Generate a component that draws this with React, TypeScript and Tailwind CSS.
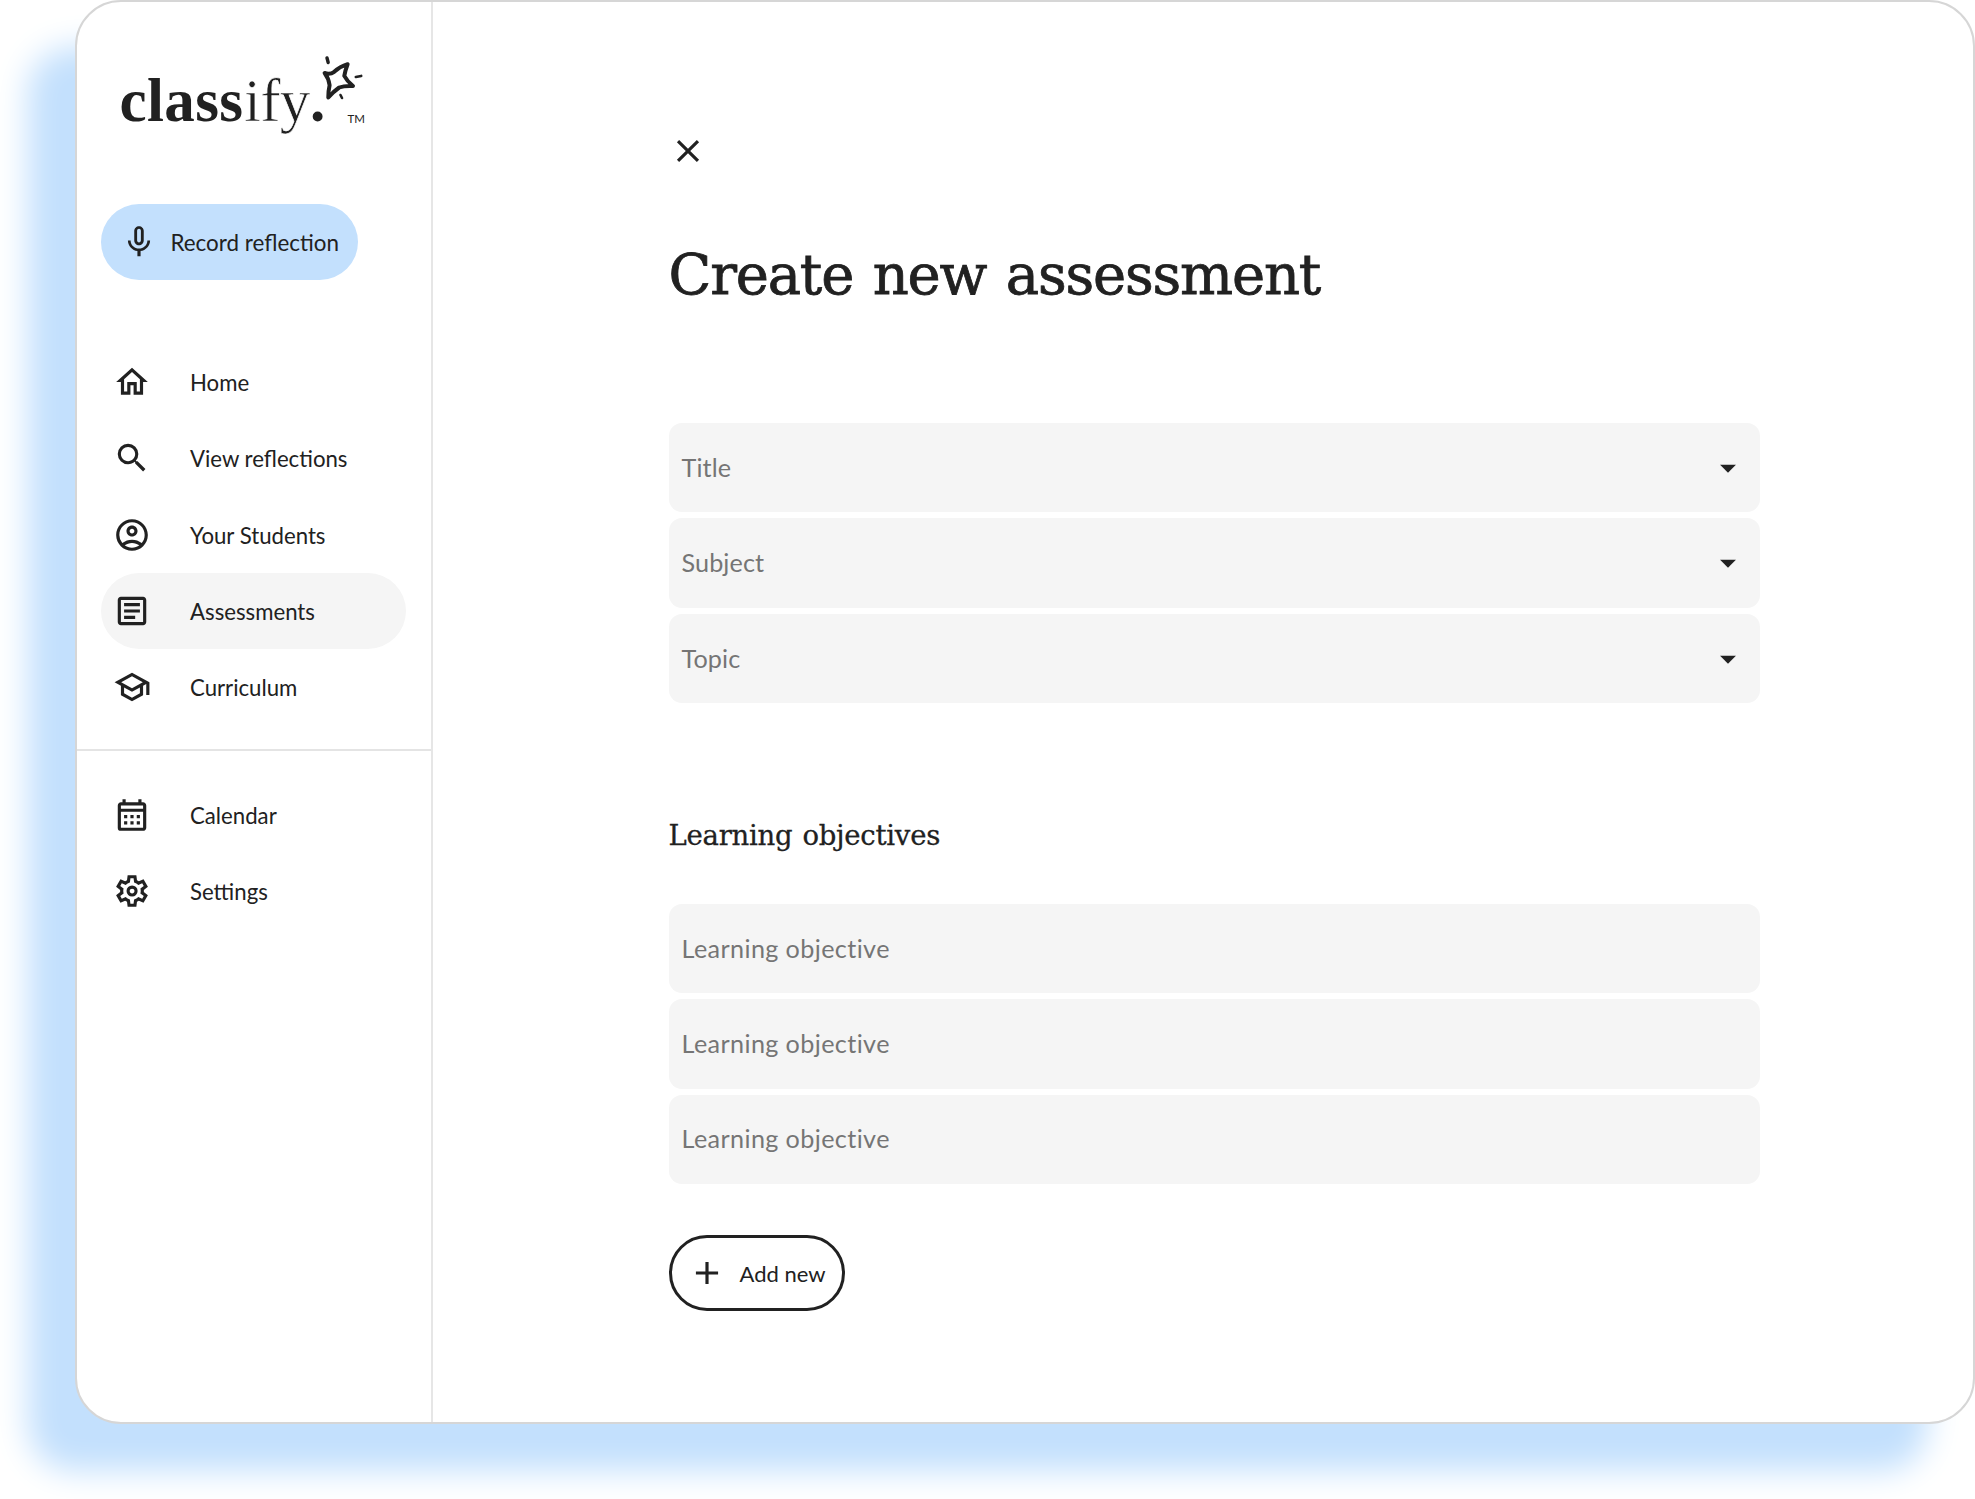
import React from 'react';
import type { ReactNode } from 'react';
import {
  MdAdd,
  MdArrowDropDown,
  MdClose,
  MdMicNone,
  MdOutlineAccountCircle,
  MdOutlineArticle,
  MdOutlineCalendarMonth,
  MdOutlineSchool,
  MdSearch,
} from 'react-icons/md';

function HouseIcon() {
  return (
    <svg viewBox="0 0 24 24" className="size-[38px]" fill="currentColor">
      <path d="M12 5.69l5 4.5V18h-2v-6H9v6H7v-7.81l5-4.5M12 3L2 12h3v8h6v-6h2v6h6v-8h3L12 3z" />
    </svg>
  );
}

function GearIcon() {
  return (
    <svg viewBox="0 -960 960 960" className="size-[38px]" fill="currentColor" fillRule="evenodd">
      <path d="m370-80-16-128q-13-5-24.5-12T307-235l-119 50L78-375l103-78q-1-7-1-13.5v-27q0-6.5 1-13.5L78-585l110-190 119 50q11-8 23-15t24-12l16-128h220l16 128q13 5 24.5 12t22.5 15l119-50 110 190-103 78q1 7 1 13.5v27q0 6.5-2 13.5l103 78-110 190-118-50q-11 8-23 15t-24 12L590-80H370Zm70-80h79l14-106q31-8 57.5-23.5T639-327l99 41 39-68-86-65q5-14 7-29.5t2-31.5q0-16-2-31.5t-7-29.5l86-65-39-68-99 42q-22-23-48.5-38.5T533-694l-13-106h-79l-14 106q-31 8-57.5 23.5T321-633l-99-41-39 68 86 64q-5 15-7 30t-2 32q0 16 2 31t7 30l-86 65 39 68 99-42q22 23 48.5 38.5T427-266l13 106Zm42-180q58 0 99-41t41-99q0-58-41-99t-99-41q-59 0-99.5 41T342-480q0 58 40.5 99t99.5 41Zm0-80q-25 0-42.5-17.5T422-480q0-25 17.5-42.5T482-540q25 0 42.5 17.5T542-480q0 25-17.5 42.5T482-420Z" />
    </svg>
  );
}

function Logo() {
  return (
    <div className="relative ml-[42.5px] mt-[63px] flex h-[72px] w-[250px] items-center whitespace-nowrap font-['Liberation_Serif',serif] text-[61px] leading-[72px]">
      <span className="w-[124.5px] tracking-[0.4px] font-bold">class</span>
      <span className="w-[66px] tracking-[-0.8px] [-webkit-text-stroke:0.7px_#ffffff]">ify</span>
      <span className="font-bold">.</span>
      <svg
        viewBox="0 0 44 50"
        className="absolute left-[201px] top-[-12px] h-[50px] w-[44px]"
        fill="none"
        stroke="currentColor"
        strokeLinecap="round"
        strokeLinejoin="round"
      >
        <path
          d="M3.6 20 Q9 22 13.2 18.8 Q19 13.5 26.6 11.2 Q24.2 17.500 23.3 22.8 Q26 28 32 33 Q23.500 32.500 18.200 34.500 Q12.500 38.500 7.300 44.500 Q7.200 38.500 8.600 32.300 Q7.800 25.500 3.600 20 Z"
          strokeWidth="4"
        />
        <path d="M6 5 L7.200 9.500" strokeWidth="3.4" />
        <path d="M34.800 24 L40.200 22.900" strokeWidth="2.6" />
        <path d="M19.500 42 L21 45" strokeWidth="2.6" />
      </svg>
      <span className="absolute left-[228px] top-[47px] font-[Lato,sans-serif] text-[11.5px] leading-[13px]">TM</span>
    </div>
  );
}

function NavItem({ icon, label, active = false }: { icon: ReactNode; label: string; active?: boolean }) {
  return (
    <a
      className={
        active
          ? 'flex h-[76.3px] w-[305px] items-center rounded-full bg-[#f5f5f5] pl-3'
          : 'flex h-[76.3px] w-[305px] items-center rounded-full pl-3'
      }
    >
      <span className="flex w-[77px] shrink-0 text-[38px]">{icon}</span>
      <span className="mt-px text-[22.2px]">{label}</span>
    </a>
  );
}

function SelectField({ label }: { label: string }) {
  return (
    <div className="flex h-[89.3px] items-center justify-between rounded-[13px] bg-[#f5f5f5] pl-[13px] pr-[13px]">
      <span className="text-[25.2px] tracking-[0.1px] text-[#757575]">{label}</span>
      <MdArrowDropDown className="size-[38px]" />
    </div>
  );
}

function TextField({ label }: { label: string }) {
  return (
    <div className="flex h-[89.3px] items-center rounded-[13px] bg-[#f5f5f5] pl-[13px]">
      <span className="text-[25.2px] tracking-[0.38px] text-[#757575]">{label}</span>
    </div>
  );
}

function Sidebar() {
  return (
    <aside className="flex w-[356px] shrink-0 flex-col border-r-2 border-[#e6e6e6]">
      <Logo />
      <button className="ml-6 mt-[67px] flex h-[76px] w-[257px] items-center rounded-full bg-[#c3e0fd] pl-[18.5px]">
        <MdMicNone className="size-[38px]" />
        <span className="ml-[13px] mt-px whitespace-nowrap text-[22.4px]">Record reflection</span>
      </button>
      <nav className="ml-6 mt-[64px] flex flex-col">
        <NavItem icon={<HouseIcon />} label="Home" />
        <NavItem icon={<MdSearch />} label="View reflections" />
        <NavItem icon={<MdOutlineAccountCircle />} label="Your Students" />
        <NavItem icon={<MdOutlineArticle />} label="Assessments" active />
        <NavItem icon={<MdOutlineSchool />} label="Curriculum" />
      </nav>
      <hr className="mt-[23.5px] border-t-2 border-[#e4e4e4]" />
      <nav className="ml-6 mt-[26px] flex flex-col">
        <NavItem icon={<MdOutlineCalendarMonth />} label="Calendar" />
        <NavItem icon={<GearIcon />} label="Settings" />
      </nav>
    </aside>
  );
}

export default function App() {
  return (
    <div className="h-[1499px] w-[1975px] overflow-hidden bg-white pl-[75px] font-[Lato,sans-serif] text-[#212121]">
      <div className="flex h-[1424px] w-[1900px] rounded-[46px] border-2 border-[#d6d6d6] bg-white shadow-[-47px_47px_32px_0px_#c3e0fd]">
        <Sidebar />
        <main className="ml-[235.5px] flex w-[1091.5px] flex-col">
          <button className="mt-[130px] flex size-[38px]">
            <MdClose className="size-[38px]" />
          </button>
          <h1 className="mt-[64.5px] whitespace-nowrap font-['DejaVu_Serif',serif] text-[56px] leading-[80px] tracking-[-1.2px] [word-spacing:3px] [-webkit-text-stroke:0.8px_#212121]">
            Create new assessment
          </h1>
          <section className="mt-[108.5px] flex flex-col gap-[6.2px]">
            <SelectField label="Title" />
            <SelectField label="Subject" />
            <SelectField label="Topic" />
          </section>
          <h2 className="mt-[112px] whitespace-nowrap font-['DejaVu_Serif',serif] text-[27.5px] leading-[40px] tracking-[-0.25px] [word-spacing:1.5px] [-webkit-text-stroke:0.3px_#212121]">
            Learning objectives
          </h2>
          <section className="mt-[48.5px] flex flex-col gap-[6.2px]">
            <TextField label="Learning objective" />
            <TextField label="Learning objective" />
            <TextField label="Learning objective" />
          </section>
          <button className="mt-[50.8px] flex h-[76.5px] w-[176.5px] items-center rounded-full border-[3px] border-[#212121] pl-4">
            <MdAdd className="size-[38px]" />
            <span className="ml-[14px] mt-px whitespace-nowrap text-[22px]">Add new</span>
          </button>
        </main>
      </div>
    </div>
  );
}
